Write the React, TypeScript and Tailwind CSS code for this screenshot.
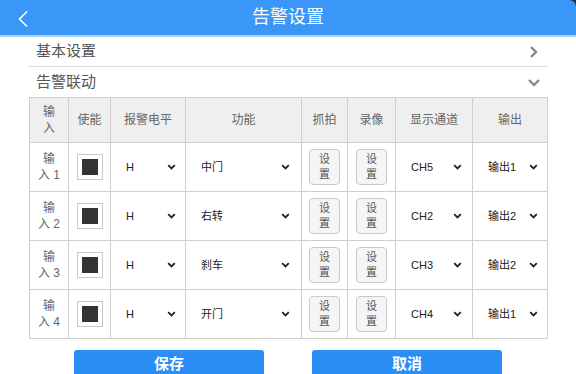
import React from "react";

const Chevron = () => (
  <svg width="9" height="6" viewBox="0 0 9 6" className="shrink-0">
    <polyline points="1.2,1.2 4.5,4.5 7.8,1.2" fill="none" stroke="#222" strokeWidth="1.8" />
  </svg>
);

const Sel = ({ v, pr }: { v: string; pr: string }) => (
  <div className={`flex items-center justify-between pl-[15px] ${pr} text-[11px] text-[#222]`}>
    <span>{v}</span>
    <Chevron />
  </div>
);

const Check = () => (
  <div className="mx-auto flex h-[26px] w-[26px] items-center justify-center border border-[#c8c8c8] bg-white">
    <div className="h-[16px] w-[16px] bg-[#333]" />
  </div>
);

const SetBtn = () => (
  <div className="mx-auto flex h-[36px] w-[31px] flex-col items-center justify-center rounded-[4px] border border-[#c9c9c9] bg-[#f5f5f5] text-[11px] leading-[15px] text-[#555]">
    <span>设</span>
    <span>置</span>
  </div>
);

const rows = [
  { n: "1", f: "中门", ch: "CH5", o: "输出1" },
  { n: "2", f: "右转", ch: "CH2", o: "输出2" },
  { n: "3", f: "刹车", ch: "CH3", o: "输出2" },
  { n: "4", f: "开门", ch: "CH4", o: "输出1" },
];

export default function App() {
  return (
    <div
      className="h-[374px] w-[576px] overflow-hidden bg-white"
      style={{ fontFamily: '"Liberation Sans", "Noto Sans CJK SC", sans-serif' }}
    >
      <div className="bg-[#22364a]">
        <div className="relative flex h-[35px] items-center justify-center rounded-tr-[7px] bg-[#3a97f8]">
          <svg width="12" height="18" viewBox="0 0 12 18" className="absolute left-[17px] top-[10px]">
            <polyline points="10,1.5 2.5,9 10,16.5" fill="none" stroke="#fff" strokeWidth="1.6" />
          </svg>
          <span className="text-[18px] text-white">告警设置</span>
        </div>
      </div>
      <div className="h-[2px] bg-[#a6d1f9]" />
      <div className="px-[28px]">
        <div className="flex h-[30px] items-center justify-between border-b border-[#dcdcdc] pl-[8px] pr-[10px]">
          <span className="text-[15px] text-[#555]">基本设置</span>
          <svg width="9" height="14" viewBox="0 0 9 14">
            <polyline points="2,2 7,7 2,12" fill="none" stroke="#888" strokeWidth="2.4" />
          </svg>
        </div>
        <div className="flex h-[30px] items-center justify-between pl-[8px] pr-[7px]">
          <span className="text-[15px] text-[#555]">告警联动</span>
          <svg width="14" height="9" viewBox="0 0 14 9">
            <polyline points="2,2 7,7 12,2" fill="none" stroke="#888" strokeWidth="2.4" />
          </svg>
        </div>
        <table className="mx-[1px] w-[518px] table-fixed border-collapse text-[12px] text-[#666]">
          <colgroup>
            <col className="w-[39px]" />
            <col className="w-[42px]" />
            <col className="w-[75px]" />
            <col className="w-[116px]" />
            <col className="w-[46px]" />
            <col className="w-[48px]" />
            <col className="w-[77px]" />
            <col className="w-[75px]" />
          </colgroup>
          <thead>
            <tr className="h-[45px] bg-[#efefef]">
              {["输入", "使能", "报警电平", "功能", "抓拍", "录像", "显示通道", "输出"].map((h, i) => (
                <th
                  key={h}
                  className={`border border-[#cfcfcf] p-0 text-center font-normal leading-[16px] ${i === 0 ? "px-[10px]" : ""}`}
                >
                  {h}
                </th>
              ))}
            </tr>
          </thead>
          <tbody>
            {rows.map((r) => (
              <tr key={r.n} className="h-[49px]">
                <td className="border border-[#cfcfcf] p-0 text-center leading-[16px]">
                  输<br />入 {r.n}
                </td>
                <td className="border border-[#cfcfcf] p-0">
                  <Check />
                </td>
                <td className="border border-[#cfcfcf] p-0">
                  <Sel v="H" pr="pr-[9px]" />
                </td>
                <td className="border border-[#cfcfcf] p-0">
                  <Sel v={r.f} pr="pr-[11px]" />
                </td>
                <td className="border border-[#cfcfcf] p-0">
                  <SetBtn />
                </td>
                <td className="border border-[#cfcfcf] p-0">
                  <SetBtn />
                </td>
                <td className="border border-[#cfcfcf] p-0">
                  <Sel v={r.ch} pr="pr-[10px]" />
                </td>
                <td className="border border-[#cfcfcf] p-0">
                  <Sel v={r.o} pr="pr-[9px]" />
                </td>
              </tr>
            ))}
          </tbody>
        </table>
      </div>
      <div className="mt-[11px] flex pl-[74px]">
        <div className="flex h-[28px] w-[190px] items-center justify-center rounded-t-[3px] bg-[#2b8ef6] text-[15px] font-bold text-white">
          保存
        </div>
        <div className="ml-[48px] flex h-[28px] w-[190px] items-center justify-center rounded-t-[3px] bg-[#2b8ef6] text-[15px] font-bold text-white">
          取消
        </div>
      </div>
    </div>
  );
}
